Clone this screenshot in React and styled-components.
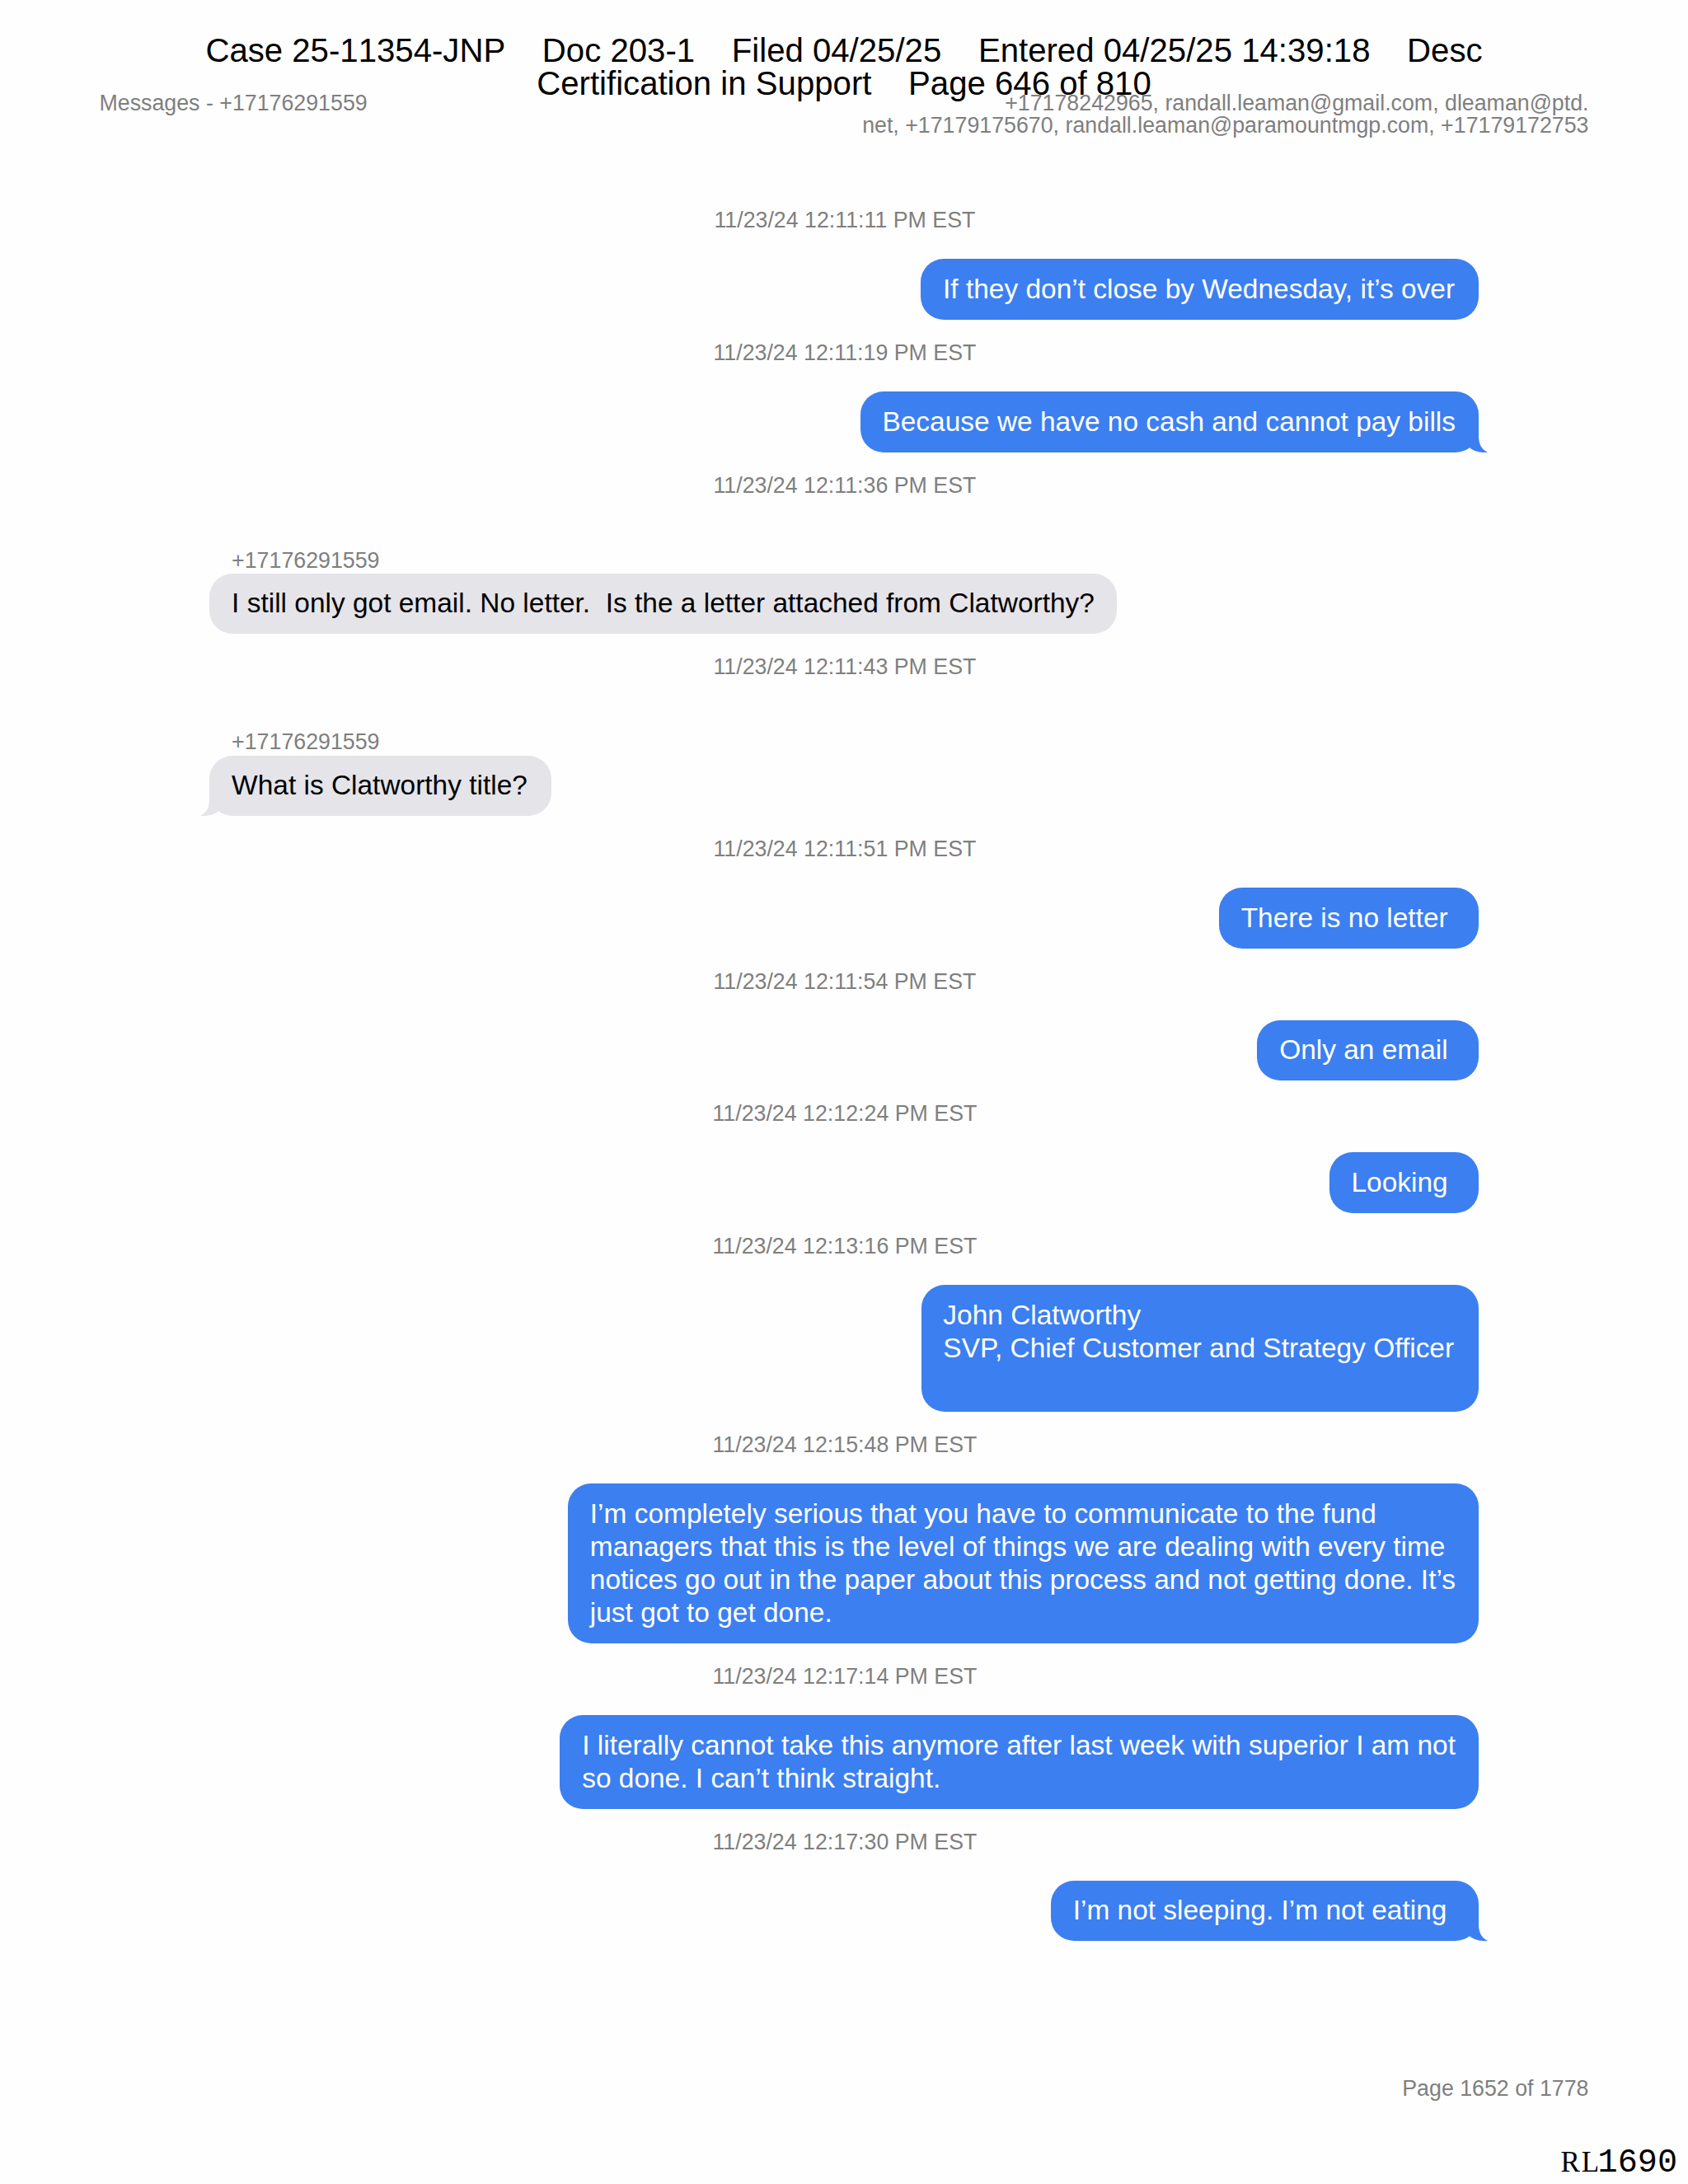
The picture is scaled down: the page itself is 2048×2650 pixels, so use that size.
import React from "react"
import styled, { createGlobalStyle } from "styled-components"

const BLUE = "#3c7ff0"
const GREY = "#e5e4e9"

const GlobalStyle = createGlobalStyle`
  * {
    box-sizing: border-box;
  }
  body {
    margin: 0;
    background: #fefefe;
  }
`

const Page = styled.main`
  display: flex;
  flex-direction: column;
  width: 2048px;
  height: 2650px;
  overflow: hidden;
  background: #fefefe;
  color: #000;
  font-family: "Liberation Sans", Arial, sans-serif;
`

const CourtStamp = styled.div`
  padding-top: 42px;
  height: 122px;
  font-size: 40.16px;
  line-height: 40.16px;
  text-align: center;
  white-space: pre;
  font-kerning: none;
`

const Header = styled.header`
  display: flex;
  justify-content: space-between;
  height: 80px;
  margin: -10px 120.5px 0 120.5px;
  font-size: 26.77px;
  line-height: 26.77px;
  color: #7f7f7f;
`

const Participants = styled.div`
  text-align: right;
  white-space: pre;
`

const Thread = styled.section`
  display: flex;
  flex-direction: column;
  flex: 1;
  margin: 35.3px 254.5px 0 254.3px;
`

const Timestamp = styled.time`
  height: 87px;
  padding-left: 2px;
  font-size: 26.77px;
  line-height: 81px;
  text-align: center;
  color: #7f7f7f;
`

const Message = styled.article`
  display: flex;
  flex-direction: column;
  align-items: ${({ $mine }) => ($mine ? "flex-end" : "flex-start")};
`

const Sender = styled.div`
  height: 60.2px;
  padding: 29px 0 0 26.8px;
  font-size: 26.77px;
  line-height: 30px;
  color: #7f7f7f;
`

const Bubble = styled.div`
  position: relative;
  padding: 16.7px ${({ $slack }) => 26.8 + $slack}px 16.77px 26.8px;
  border-radius: 28px;
  background: ${({ $mine }) => ($mine ? BLUE : GREY)};
  color: ${({ $mine }) => ($mine ? "#fff" : "#000")};
  font-size: 33.46px;
  line-height: 40.16px;
  white-space: pre;
`

const TailShape = styled.svg`
  position: absolute;
  bottom: 0;
  width: 24px;
  height: 30px;
  fill: ${({ $mine }) => ($mine ? BLUE : GREY)};
  ${({ $mine }) =>
    $mine ? "right: -12px;" : "left: -12px; transform: scaleX(-1);"}
`

const Footer = styled.footer`
  display: flex;
  flex-direction: column;
  align-items: flex-end;
  height: 141px;
`

const PageNumber = styled.div`
  margin-right: 120.5px;
  font-size: 26.77px;
  line-height: 50px;
  color: #7f7f7f;
`

const BatesNumber = styled.div`
  margin: 45px 13px 0 0;
  font-family: "Liberation Mono", "Courier New", monospace;
  font-size: 40.16px;
  line-height: 40px;
`

// slab-like capitals, the mono family has none
const BatesPrefix = styled.span`
  margin-right: -3.6px;
  font-family: "Liberation Serif", serif;
  font-size: 35px;
  letter-spacing: 2px;
`

const PHONE = "+17176291559"

const messages = [
  { time: "12:11:11", mine: true, slack: 1.6, text: "If they don’t close by Wednesday, it’s over" },
  { time: "12:11:19", mine: true, tail: true, text: "Because we have no cash and cannot pay bills" },
  { time: "12:11:36", text: "I still only got email. No letter.  Is the a letter attached from Clatworthy?" },
  { time: "12:11:43", tail: true, slack: 2.4, text: "What is Clatworthy title?" },
  { time: "12:11:51", mine: true, text: "There is no letter " },
  { time: "12:11:54", mine: true, text: "Only an email " },
  { time: "12:12:24", mine: true, text: "Looking " },
  {
    time: "12:13:16",
    mine: true,
    slack: 2.6,
    text: "John Clatworthy\nSVP, Chief Customer and Strategy Officer\n\n",
  },
  {
    time: "12:15:48",
    mine: true,
    text:
      "I’m completely serious that you have to communicate to the fund\n" +
      "managers that this is the level of things we are dealing with every time\n" +
      "notices go out in the paper about this process and not getting done. It’s\n" +
      "just got to get done.",
  },
  {
    time: "12:17:14",
    mine: true,
    text:
      "I literally cannot take this anymore after last week with superior I am not\n" +
      "so done. I can’t think straight.",
  },
  { time: "12:17:30", mine: true, tail: true, slack: 2, text: "I’m not sleeping. I’m not eating " },
]

const Tail = ({ mine }) => (
  <TailShape $mine={mine} viewBox="-12 -30 24 30">
    <path d="M-12 -30H0V-20C0 -11 3 -4 11 0C3 0.5 -6 -1 -11.7 -6.5Z" />
  </TailShape>
)

const App = () => (
  <>
    <GlobalStyle />
    <Page>
      <CourtStamp>
        {"Case 25-11354-JNP    Doc 203-1    Filed 04/25/25    Entered 04/25/25 14:39:18    Desc\n"}
        {"Certification in Support    Page 646 of 810"}
      </CourtStamp>
      <Header>
        <div>Messages - {PHONE}</div>
        <Participants>
          {"+17178242965, randall.leaman@gmail.com, dleaman@ptd.\n"}
          {"net, +17179175670, randall.leaman@paramountmgp.com, +17179172753"}
        </Participants>
      </Header>
      <Thread>
        {messages.map(({ time, mine, tail, slack = 0.7, text }) => (
          <React.Fragment key={time}>
            <Timestamp>11/23/24 {time} PM EST</Timestamp>
            <Message $mine={mine}>
              {!mine && <Sender>{PHONE}</Sender>}
              <Bubble $mine={mine} $slack={slack}>
                {text}
                {tail && <Tail mine={mine} />}
              </Bubble>
            </Message>
          </React.Fragment>
        ))}
      </Thread>
      <Footer>
        <PageNumber>Page 1652 of 1778</PageNumber>
        <BatesNumber>
          <BatesPrefix>RL</BatesPrefix>1690
        </BatesNumber>
      </Footer>
    </Page>
  </>
)

export default App
